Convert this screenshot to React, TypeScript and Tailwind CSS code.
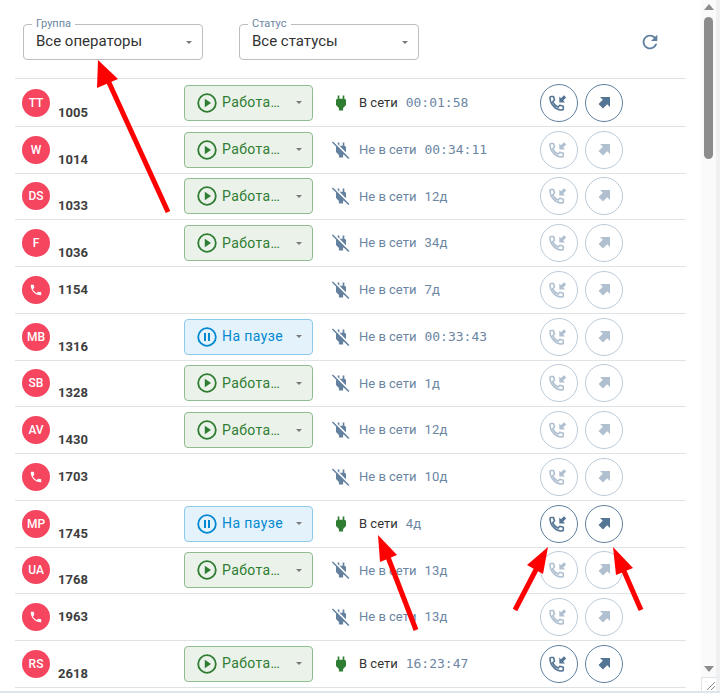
const rows = [
  { initials: "TT", ext: "1005", state: "work", online: true, time: "00:01:58", mono: true },
  { initials: "W", ext: "1014", state: "work", online: false, time: "00:34:11", mono: true },
  { initials: "DS", ext: "1033", state: "work", online: false, time: "12д" },
  { initials: "F", ext: "1036", state: "work", online: false, time: "34д" },
  { initials: "", ext: "1154", state: "", online: false, time: "7д" },
  { initials: "MB", ext: "1316", state: "pause", online: false, time: "00:33:43", mono: true },
  { initials: "SB", ext: "1328", state: "work", online: false, time: "1д" },
  { initials: "AV", ext: "1430", state: "work", online: false, time: "12д" },
  { initials: "", ext: "1703", state: "", online: false, time: "10д" },
  { initials: "MP", ext: "1745", state: "pause", online: true, time: "4д" },
  { initials: "UA", ext: "1768", state: "work", online: false, time: "13д" },
  { initials: "", ext: "1963", state: "", online: false, time: "13д" },
  { initials: "RS", ext: "2618", state: "work", online: true, time: "16:23:47", mono: true },
];

const arrowTails = [
  "M168 212 L106 76",
  "M416 630 L386 552",
  "M515 610 L540 562",
  "M641 610 L620 562",
];

const Caret = () => (
  <span className="h-0 w-0 border-x-[3px] border-t-[3px] border-x-transparent border-t-[#7a7a7a]" />
);

const FilterSelect = ({ label, value }: { label: string; value: string }) => (
  <div className="relative flex h-9 w-[180px] items-center justify-between rounded border border-[#bdbdbd] pl-3 pr-[10px]">
    <span className="absolute -top-[8px] left-[8px] bg-white px-1 text-[11px] leading-[14px] text-[#6b86a3]">
      {label}
    </span>
    <span className="mb-[2px] text-[15px] text-[#333]">{value}</span>
    <Caret />
  </div>
);

const StatusSelect = ({ state }: { state: string }) => {
  const isWork = state === "work";
  return (
    <div
      className={
        isWork
          ? "flex h-9 w-[129px] items-center rounded border border-[#8fbc91] bg-[#ebf2ea] pl-[12px] pr-[10px] text-[#2e7d32]"
          : "flex h-9 w-[129px] items-center rounded border border-[#8ec8ec] bg-[#e4f3fb] pl-[12px] pr-[10px] text-[#0288d1]"
      }
    >
      <svg width="20" height="20" viewBox="0 0 20 20" className="shrink-0">
        <circle cx="10" cy="10" r="8.800" fill="none" stroke="currentColor" strokeWidth="1.800" />
        {isWork ? (
          <path d="M7.800 5.800 14 10l-6.200 4.200z" fill="currentColor" />
        ) : (
          <path d="M7 6h2v8H7zM11 6h2v8h-2z" fill="currentColor" />
        )}
      </svg>
      <span className="ml-[5px] whitespace-nowrap text-[14px] tracking-[0.4px]">
        {isWork ? "Работа…" : "На паузе"}
      </span>
      <span className="ml-auto flex">
        <Caret />
      </span>
    </div>
  );
};

const PlugIcon = ({ online }: { online: boolean }) => (
  <svg width="20" height="20" viewBox="0 0 24 24" fill={online ? "#2e7d32" : "#64809f"}>
    {online ? (
      <path d="M16 7V3h-2v4h-4V3H8v4c-1 0-2 1-2 2v5.500L9.500 18v3h5v-3l3.500-3.500V9c0-1-1-2-2-2z" />
    ) : (
      <path d="M22.110 21.460 2.390 1.730 1.110 3l5.160 5.160C6.100 8.420 6 8.710 6 9v5.500L9.500 18v3h5v-3l.7-.71 5.640 5.440 1.270-1.270zM18 14.500V9c0-1-1-2-2-2V3h-2v4h-3.800l7.650 7.650.15-.15zM10 3H8v1.800l2 2V3z" />
    )}
  </svg>
);

const PhoneIcon = () => (
  <svg width="22" height="22" viewBox="0 0 22 22">
    <path
      d="M2 5.500a1 1 0 0 1 1-1h2.500l1 3.500-1.800 1.800c1 2.200 3 4.200 5.300 5.300l1.800-1.800 3.500 1v2.600a1 1 0 0 1-1 1C8 18.900 2 12 2 5.500z"
      fill="none"
      stroke="currentColor"
      strokeWidth="1.600"
      strokeLinejoin="round"
    />
    <path d="M11.300 10.500V4.500L13 6.200l3-3L18.200 5.400l-3 3L17 10.500z" fill="currentColor" />
  </svg>
);

const ForwardIcon = () => (
  <svg width="14" height="14" viewBox="0 0 14 14" fill="currentColor">
    <path d="M3 1h10v10l-2.800-2.800-4.200 4.300L1.500 8 5.800 3.800z" />
  </svg>
);

const ActionButtons = ({ active }: { active: boolean }) => {
  const cls = active
    ? "flex h-[38px] w-[38px] items-center justify-center rounded-full border border-[#5f7f9f] text-[#557595]"
    : "flex h-[38px] w-[38px] items-center justify-center rounded-full border border-[#bccbd9] text-[#b0c0d0]";
  return (
    <div className="-ml-px flex gap-[7px]">
      <button type="button" className={cls}>
        <PhoneIcon />
      </button>
      <button type="button" className={cls}>
        <ForwardIcon />
      </button>
    </div>
  );
};

const OperatorRow = ({ row }: { row: (typeof rows)[number] }) => (
  <div className="flex h-[46.750px] items-center border-b border-[#dfe3e6] pl-[7px]">
    <div className="flex w-[162px] shrink-0 items-center">
      <span className="flex h-7 w-7 shrink-0 items-center justify-center rounded-full bg-[#f5455f] text-[12px] font-medium text-white">
        {row.initials || (
          <svg width="14" height="14" viewBox="0 0 24 24" fill="currentColor">
            <path d="M6.600 10.800c1.400 2.800 3.800 5.100 6.600 6.600l2.200-2.200c.3-.3.700-.4 1-.2 1.100.4 2.300.6 3.600.6.600 0 1 .4 1 1V20c0 .6-.4 1-1 1C10.600 21 3 13.400 3 4c0-.6.400-1 1-1h3.500c.6 0 1 .4 1 1 0 1.300.2 2.500.6 3.600.1.300 0 .7-.2 1l-2.300 2.200z" />
          </svg>
        )}
      </span>
      <span
        className={
          row.initials
            ? "ml-2 mt-[20px] text-[13px] font-bold leading-4 text-[#3d3d3d]"
            : "ml-2 text-[13px] font-bold leading-4 text-[#3d3d3d]"
        }
      >
        {row.ext}
      </span>
    </div>
    <div className="w-[147px] shrink-0">{row.state && <StatusSelect state={row.state} />}</div>
    <div className="flex w-[210px] shrink-0 items-center">
      <PlugIcon online={row.online} />
      <span
        className={
          row.online ? "ml-2 text-[13px] text-[#333]" : "ml-2 text-[13px] text-[#6b86a3]"
        }
      >
        {row.online ? "В сети" : "Не в сети"}
      </span>
      <span
        className={
          row.mono
            ? "ml-2 font-['DejaVu_Sans_Mono',monospace] text-[13px] text-[#6b86a3]"
            : "ml-2 text-[13px] tracking-[0.2px] text-[#6b86a3]"
        }
      >
        {row.time}
      </span>
    </div>
    <ActionButtons active={row.online} />
  </div>
);

export default function App() {
  return (
    <div className="relative flex h-[693px] w-[720px] flex-col overflow-hidden bg-white font-['Roboto',sans-serif]">
      <div className="flex h-[691px] shrink-0">
        <main className="w-[701px] shrink-0 pl-[15px]">
          <div className="flex h-[79px] w-[671px] items-start border-b border-[#dfe3e6] pl-2 pt-6">
            <FilterSelect label="Группа" value="Все операторы" />
            <div className="ml-9">
              <FilterSelect label="Статус" value="Все статусы" />
            </div>
            <svg width="22" height="22" viewBox="0 0 24 24" fill="#5f7f9f" className="ml-[220px] mt-[7px]">
              <path d="M17.650 6.350C16.200 4.900 14.210 4 12 4c-4.420 0-7.990 3.580-7.990 8s3.570 8 7.990 8c3.730 0 6.840-2.550 7.730-6h-2.080c-.82 2.330-3.040 4-5.650 4-3.310 0-6-2.690-6-6s2.690-6 6-6c1.660 0 3.140.69 4.220 1.780L13 11h7V4l-2.350 2.350z" />
            </svg>
          </div>
          <div className="mt-px w-[671px]">
            {rows.map((row) => (
              <OperatorRow key={row.ext} row={row} />
            ))}
          </div>
        </main>

        {/* window scrollbar */}
        <aside className="flex w-[15px] shrink-0 flex-col items-center bg-[#fafafa]">
          <span className="mt-[4px] h-0 w-0 border-x-[5px] border-b-[6px] border-x-transparent border-b-[#8c8c8c]" />
          <span className="mt-[7px] h-[142px] w-[9px] rounded-full bg-[#8c8c8c]" />
          <span className="mb-[5px] mt-auto h-0 w-0 border-x-[5px] border-t-[6px] border-x-transparent border-t-[#8c8c8c]" />
          <span className="flex h-[14px] w-full items-end justify-end border-l border-t border-[#dfe3e6] bg-white">
            <svg width="10" height="10" viewBox="0 0 10 10" stroke="#8c8c8c" strokeWidth="1">
              <path d="M1 9 9 1M5 9 9 5" />
            </svg>
          </span>
        </aside>
        <div className="w-1 shrink-0 bg-[#eef0f2]" />
      </div>
      <div className="h-[2px] shrink-0 bg-[#dfe5ea]" />

      {/* red annotation arrows */}
      <svg width="720" height="693" className="pointer-events-none absolute left-0 top-0">
        {arrowTails.map((d) => (
          <path key={d} d={d} stroke="#ff0000" strokeWidth="5" fill="none" />
        ))}
        <polygon points="98,60 118,79 97,88" fill="#ff0000" />
        <polygon points="378,535 397,555 380,562" fill="#ff0000" />
        <polygon points="548,547 543,574 527,565" fill="#ff0000" />
        <polygon points="613,547 633,568 616,575" fill="#ff0000" />
      </svg>
    </div>
  );
}
